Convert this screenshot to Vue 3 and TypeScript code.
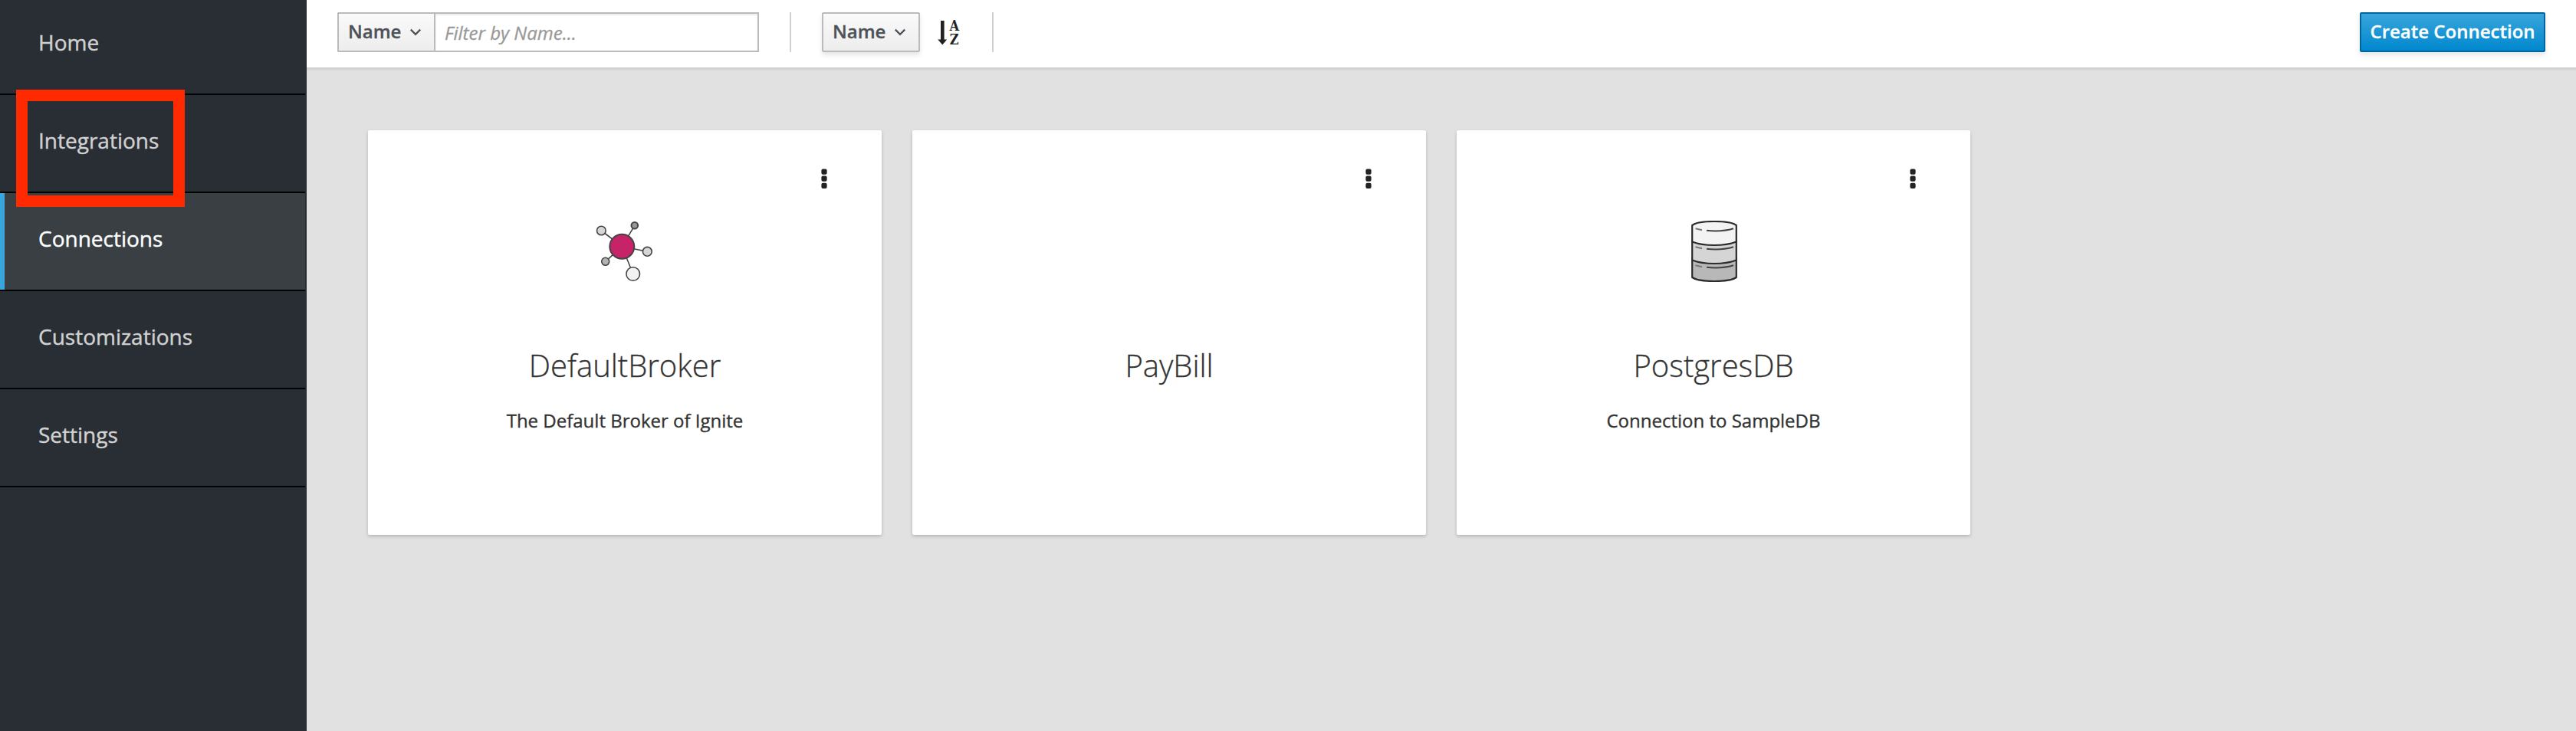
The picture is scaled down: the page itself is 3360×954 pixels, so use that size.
<script setup lang="ts">
import { ref } from 'vue'

interface NavItem {
  label: string
  active?: boolean
}

interface Connection {
  name: string
  description?: string
  icon?: 'broker' | 'database'
}

const navItems: NavItem[] = [
  { label: 'Home' },
  { label: 'Integrations' },
  { label: 'Connections', active: true },
  { label: 'Customizations' },
  { label: 'Settings' },
]

const connections: Connection[] = [
  { name: 'DefaultBroker', description: 'The Default Broker of Ignite', icon: 'broker' },
  { name: 'PayBill' },
  { name: 'PostgresDB', description: 'Connection to SampleDB', icon: 'database' },
]

const filter = ref('')
const tiers = [0, 24, 48]
</script>

<template>
  <div class="app">
    <nav class="sidebar">
      <ul class="nav">
        <li v-for="item in navItems" :key="item.label" class="nav-item" :class="{ active: item.active }">
          {{ item.label }}
        </li>
      </ul>
      <div class="highlight"></div>
    </nav>

    <main class="main">
      <header class="toolbar">
        <div class="filter">
          <button class="btn btn-addon" type="button">
            <span>Name</span>
            <svg class="chevron" width="16" height="10" viewBox="0 0 16 10">
              <path d="M1.8 1.6 8 7.8 14.2 1.6" fill="none" stroke="currentColor" stroke-width="2.3" />
            </svg>
          </button>
          <input v-model="filter" class="filter-input" type="text" placeholder="Filter by Name..." />
        </div>
        <div class="divider"></div>
        <button class="btn btn-sort" type="button">
          <span>Name</span>
          <svg class="chevron" width="16" height="10" viewBox="0 0 16 10">
            <path d="M1.8 1.6 8 7.8 14.2 1.6" fill="none" stroke="currentColor" stroke-width="2.3" />
          </svg>
        </button>
        <svg class="sort-icon" width="32" height="36" viewBox="0 0 32 36">
          <path d="M5 2h4.6v24.5h3.6L7.3 33.6 1.2 26.5H5z" fill="#222" />
          <text class="sort-letter" x="22.7" y="15" text-anchor="middle">A</text>
          <text class="sort-letter" x="22.7" y="33.400" text-anchor="middle">Z</text>
        </svg>
        <div class="divider"></div>
        <button class="btn btn-primary" type="button">Create Connection</button>
      </header>

      <section class="cards">
        <article v-for="item in connections" :key="item.name" class="card">
          <svg class="kebab" width="8" height="26" viewBox="0 0 8 26">
            <rect x="0.4" y="0.6" width="7.2" height="7.2" rx="2" />
            <rect x="0.4" y="9.600" width="7.2" height="7.2" rx="2" />
            <rect x="0.4" y="18.700" width="7.2" height="7.2" rx="2" />
          </svg>
          <div class="card-icon">
            <svg v-if="item.icon === 'broker'" width="80" height="80" viewBox="0 0 80 80">
              <g stroke="#444" stroke-width="1.6">
                <path d="M36.3 33.7 9.3 13M36.3 33.7 52.8 6.3M36.3 33.7 69.3 40.3M36.3 33.7 14.7 53.3M36.3 33.7 50.7 69.5" />
                <circle cx="9.3" cy="13" r="5.8" fill="#d6d6d6" />
                <circle cx="52.8" cy="6.3" r="4.3" fill="#999" stroke-width="2" />
                <circle cx="69.3" cy="40.3" r="5.9" fill="#d6d6d6" />
                <circle cx="14.7" cy="53.3" r="5" fill="#b3b3b3" />
                <circle cx="50.7" cy="69.5" r="8.8" fill="#f2f2f2" />
                <circle cx="36.3" cy="33.7" r="16" fill="#c62368" stroke-width="2" />
              </g>
            </svg>
            <svg v-else-if="item.icon === 'database'" class="database" width="60" height="80" viewBox="0 0 60 80">
              <g stroke="#2b2b2b" stroke-width="2.2" stroke-linejoin="round">
                <path d="M1.2 49v25C6 77.5 17 79 30 79s24-1.5 28.8-5V49z" fill="#b8b8b8" />
                <path d="M1.2 26v25.5C9 54.5 18 56 30 56s21-1.5 28.8-4.500V26z" fill="#d5d5d5" />
                <path d="M1.2 6C6 2.5 17 1 30 1s24 1.5 28.8 5v21.5C51 30.5 42 32 30 32S9 30.5 1.2 27.5z" fill="#f3f3f3" />
              </g>
              <g fill="none" stroke="#444" stroke-width="2">
                <template v-for="y in tiers" :key="y">
                  <path d="M20 12.8q20 2 35-2.6" :transform="`translate(0 ${y})`" />
                  <path d="M5.5 10.3 14 12.3" stroke="#777" :transform="`translate(0 ${y})`" />
                </template>
              </g>
            </svg>
          </div>
          <h2 class="card-title">{{ item.name }}</h2>
          <p v-if="item.description" class="card-text">{{ item.description }}</p>
        </article>
      </section>
    </main>
  </div>
</template>

<style>
html,
body {
  margin: 0;
  background: #e1e1e1;
}
</style>

<style scoped>
.app {
  display: flex;
  height: 954px;
  overflow: hidden;
  font-family: 'Open Sans', 'Noto Sans', sans-serif;
  color: #333;
}

.app * {
  box-sizing: border-box;
}

.sidebar {
  position: relative;
  flex: 0 0 400px;
  background: #292e34;
  border-right: 2px solid #292e34;
}

.nav {
  list-style: none;
  margin: -4px 0 0;
  padding: 0;
}

.nav-item {
  height: 128px;
  padding: 39px 0 0 50px;
  border-bottom: 2px solid #030303;
  font-size: 28px;
  line-height: 40px;
  color: #d1d1d1;
  -webkit-text-stroke: 0.4px currentColor;
}

.nav-item.active {
  box-shadow: inset 6px 0 0 #39a5dc;
  background: #393f43;
  color: #fff;
}

.highlight {
  position: absolute;
  left: 21px;
  top: 117px;
  width: 220px;
  height: 153px;
  border: 15px solid #ff2a00;
}

.main {
  flex: 1;
  background: #e1e1e1;
}

.toolbar {
  display: flex;
  align-items: flex-start;
  height: 90px;
  padding: 16px 40px 0;
  background: #fff;
  border-bottom: 2px solid #d1d1d1;
  box-shadow: 0 2px 0 rgba(3, 3, 3, 0.045);
}

.filter {
  display: flex;
}

.btn {
  display: flex;
  height: 52px;
  padding: 3px 12px 0;
  border: 2px solid #bbb;
  border-radius: 2px;
  background: linear-gradient(to bottom, #fafafa, #ededed);
  box-shadow: 0 4px 6px rgba(3, 3, 3, 0.1);
  color: #4d5258;
  font-family: inherit;
  font-size: 24px;
  font-weight: 600;
  line-height: 40px;
  white-space: nowrap;
  -webkit-text-stroke: 0.3px currentColor;
}

.btn-addon {
  width: 126px;
  border-right: 0;
  border-radius: 2px 0 0 2px;
  box-shadow: none;
}

.btn-sort {
  width: 128px;
}

.chevron {
  margin: 16px 4px 0 auto;
}

.filter-input {
  width: 424px;
  height: 52px;
  padding: 0 12px;
  border: 2px solid #bbb;
  border-radius: 0;
  background: #fff;
  box-shadow: inset 0 2px 2px rgba(3, 3, 3, 0.075);
  font-family: inherit;
  font-size: 24px;
  line-height: 40px;
  outline: none;
}

.filter-input::placeholder {
  color: #999;
  font-style: italic;
  opacity: 1;
  -webkit-text-stroke: 0.3px #999;
}

.divider {
  width: 2px;
  height: 52px;
  margin: 0 40px;
  background: #d1d1d1;
}

.sort-icon {
  margin: 9px 0 0 22px;
}

.sort-letter {
  font-family: 'DejaVu Serif Condensed', 'DejaVu Serif', serif;
  font-size: 18px;
  font-stretch: condensed;
  font-weight: 700;
  fill: #222;
}

.btn-primary {
  margin-left: auto;
  width: 242px;
  justify-content: center;
  border-color: #00659c;
  background: linear-gradient(to bottom, #39a5dc, #0088ce);
  color: #fff;
}

.cards {
  display: flex;
  gap: 40px;
  padding: 80px 80px 0;
}

.card {
  display: flex;
  flex-direction: column;
  align-items: center;
  width: 670px;
  height: 528px;
  padding-top: 50px;
  background: #fff;
  border-radius: 2px;
  box-shadow: 0 2px 4px rgba(3, 3, 3, 0.2);
}

.kebab {
  align-self: flex-end;
  margin-right: 71px;
  fill: #222;
}

.card-icon {
  height: 80px;
  margin-top: 42px;
}

.card-icon svg {
  display: block;
}

.database {
  margin-left: 2px;
}

.card-title {
  margin: 87px 0 0;
  font-size: 40px;
  font-weight: 300;
  line-height: 44px;
  -webkit-text-stroke: 0.3px currentColor;
}

.card-text {
  margin: 30px 0 0;
  font-size: 24px;
  line-height: 40px;
  -webkit-text-stroke: 0.35px currentColor;
}
</style>
